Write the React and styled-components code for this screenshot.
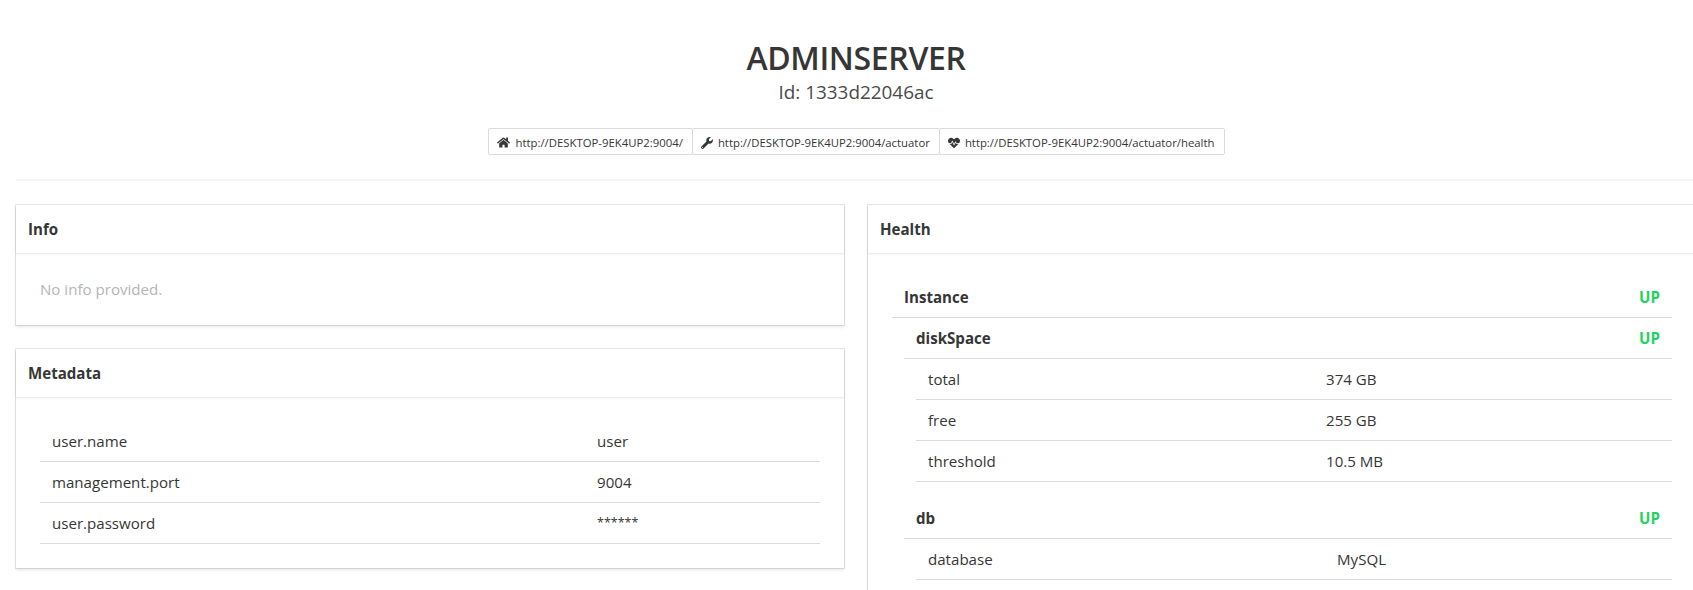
import styled, { createGlobalStyle } from 'styled-components'
import { FaHome, FaWrench, FaHeartbeat } from 'react-icons/fa'

const GlobalStyle = createGlobalStyle`
  html, body {
    margin: 0;
    height: 100%;
    overflow: hidden;
    background: white;
  }
  body {
    font-family: "Open Sans", "Noto Sans", sans-serif;
    font-size: 15.1px;
    line-height: 24px;
    color: #4a4a4a;
  }
`

const Page = styled.div`
  width: 1680px;
  padding: 40px 0 0 16px;
`

const Header = styled.header`
  display: flex;
  flex-direction: column;
  align-items: center;
`

const Title = styled.h1`
  margin: 0;
  font-size: 32px;
  font-weight: 600;
  line-height: 36px;
  letter-spacing: -0.35px;
  color: #363636;
`

const Subtitle = styled.h2`
  margin: 4px 0 0;
  font-size: 18.9px;
  font-weight: 400;
  line-height: 25px;
  color: #4a4a4a;
`

const ButtonGroup = styled.div`
  display: flex;
  margin-top: 23px;
`

const UrlButton = styled.a`
  display: flex;
  align-items: center;
  gap: 5px;
  height: 27px;
  box-sizing: border-box;
  padding: 2px 9px 0 8px;
  margin-right: -1px;
  border: 1px solid #dbdbdb;
  border-radius: 2px;
  font-size: 11.35px;
  color: #363636;
  white-space: nowrap;
`

const Divider = styled.hr`
  height: 2px;
  margin: 24px 0;
  border: none;
  background: #f5f5f5;
`

const Columns = styled.div`
  display: grid;
  grid-template-columns: 828px 828px;
  gap: 24px;
  align-items: start;
`

const Stack = styled.div`
  display: flex;
  flex-direction: column;
  gap: 24px;
`

const Card = styled.section`
  background: white;
  box-shadow: 0 2px 3px rgba(10, 10, 10, 0.1), 0 0 0 1px rgba(10, 10, 10, 0.1);
`

const CardHeader = styled.div`
  padding: 12px;
  font-weight: 700;
  color: #363636;
  box-shadow: 0 1px 2px rgba(10, 10, 10, 0.1);
`

const CardContent = styled.div`
  padding: 24px;
`

const Muted = styled.p`
  margin: 0;
  color: #b5b5b5;
`

const Row = styled.div`
  display: flex;
  justify-content: ${(p) => (p.$spread ? 'space-between' : 'flex-start')};
  padding: 8px 12px;
  margin-left: ${(p) => p.$indent || 0}px;
  border-bottom: 1px solid #dbdbdb;
  color: #363636;
`

const Key = styled.div`
  width: ${(p) => (p.$width ? `${p.$width}px` : 'auto')};
  font-weight: ${(p) => (p.$bold ? 700 : 400)};
`

const Value = styled.div`
  font-size: ${(p) => (p.$masked ? '12.5px' : 'inherit')};
`

const Status = styled.div`
  font-weight: 700;
  color: #23d160;
`

const Group = styled.div`
  margin-top: ${(p) => p.$gap || 0}px;
`

const metadata = [
  ['user.name', 'user'],
  ['management.port', '9004'],
  ['user.password', '******'],
]

const diskSpace = [
  ['total', '374 GB'],
  ['free', '255 GB'],
  ['threshold', '10.5 MB'],
]

const HealthHead = ({ name, indent }) => (
  <Row $spread $indent={indent}>
    <Key $bold>{name}</Key>
    <Status>UP</Status>
  </Row>
)

const Rows = ({ items, keyWidth, indent }) =>
  items.map(([k, v]) => (
    <Row key={k} $indent={indent}>
      <Key $width={keyWidth}>{k}</Key>
      <Value $masked={v.startsWith('*')}>{v}</Value>
    </Row>
  ))

const App = () => {
  return (
    <Page>
      <GlobalStyle />
      <Header>
        <Title>ADMINSERVER</Title>
        <Subtitle>Id: 1333d22046ac</Subtitle>
        <ButtonGroup>
          <UrlButton>
            <FaHome size={13} />
            http://DESKTOP-9EK4UP2:9004/
          </UrlButton>
          <UrlButton>
            <FaWrench size={12} />
            http://DESKTOP-9EK4UP2:9004/actuator
          </UrlButton>
          <UrlButton>
            <FaHeartbeat size={12} />
            http://DESKTOP-9EK4UP2:9004/actuator/health
          </UrlButton>
        </ButtonGroup>
      </Header>
      <Divider />
      <Columns>
        <Stack>
          <Card>
            <CardHeader>Info</CardHeader>
            <CardContent>
              <Muted>No info provided.</Muted>
            </CardContent>
          </Card>
          <Card>
            <CardHeader>Metadata</CardHeader>
            <CardContent>
              <Rows items={metadata} keyWidth={545} />
            </CardContent>
          </Card>
        </Stack>
        <Card>
          <CardHeader>Health</CardHeader>
          <CardContent>
            <HealthHead name="Instance" />
            <HealthHead name="diskSpace" indent={12} />
            <Rows items={diskSpace} keyWidth={398} indent={24} />
            <Group $gap={16}>
              <HealthHead name="db" indent={12} />
              <Rows items={[['database', 'MySQL']]} keyWidth={409} indent={24} />
            </Group>
          </CardContent>
        </Card>
      </Columns>
    </Page>
  )
}

export default App
